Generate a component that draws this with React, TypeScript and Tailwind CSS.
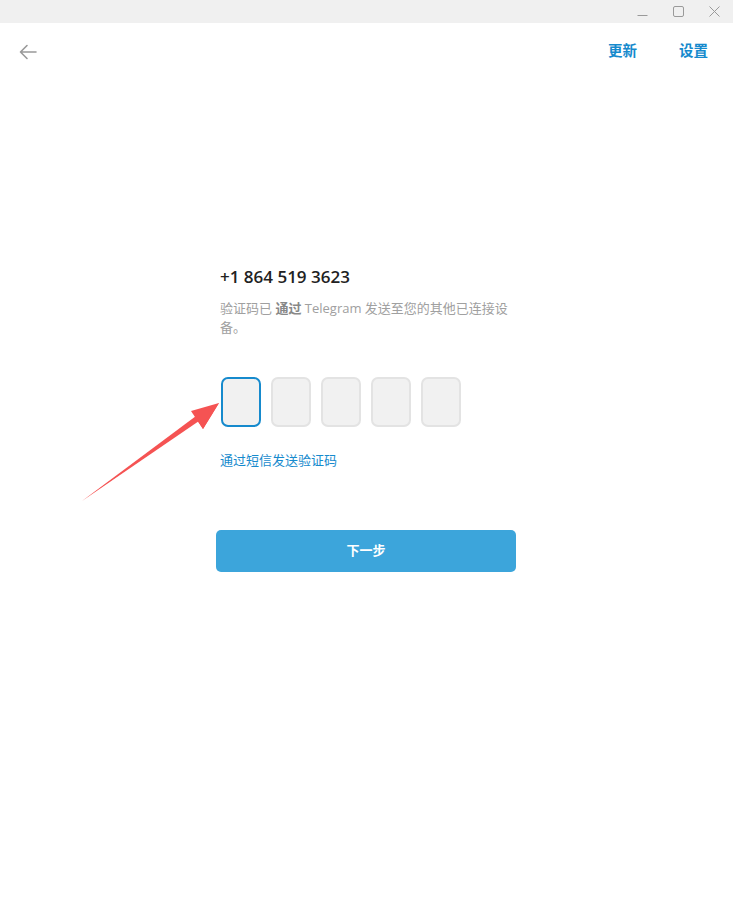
import React from "react";

const font = { fontFamily: '"Open Sans", "Noto Sans CJK SC", sans-serif' };

const CodeBox: React.FC<{ active?: boolean }> = ({ active }) => (
  <div
    className={
      "h-[50px] w-[40px] rounded-[7px] border-2 bg-[#f1f1f1] " +
      (active ? "border-[#168acd]" : "border-[#e3e3e3]")
    }
  />
);

const App: React.FC = () => {
  return (
    <div className="relative flex h-[910px] w-[733px] flex-col bg-white" style={font}>
      {/* title bar */}
      <div className="flex h-[23px] items-center justify-end bg-[#f0f0f0] pr-[1px] text-[#999]">
        <div className="flex h-[23px] w-[36px] items-center justify-center">
          <svg width="11" height="11" viewBox="0 0 11 11">
            <path d="M0.5 9.5h10" stroke="#9a9a9a" strokeWidth="1" />
          </svg>
        </div>
        <div className="flex h-[23px] w-[36px] items-center justify-center">
          <svg width="11" height="11" viewBox="0 0 11 11">
            <rect x="0.5" y="0.5" width="10" height="10" rx="1.5" fill="none" stroke="#9a9a9a" />
          </svg>
        </div>
        <div className="flex h-[23px] w-[36px] items-center justify-center">
          <svg width="11" height="11" viewBox="0 0 11 11">
            <path d="M0.5 0.5l10 10M10.5 0.5l-10 10" stroke="#9a9a9a" />
          </svg>
        </div>
      </div>

      {/* header */}
      <div className="flex h-[56px] items-center justify-between pl-[19px] pr-[25px]">
        <svg width="18" height="16" viewBox="0 0 18 16" className="mt-[1px]">
          <path
            d="M17 8H1.5M8 1.5L1.5 8 8 14.5"
            fill="none"
            stroke="#999"
            strokeWidth="1.6"
            strokeLinecap="round"
            strokeLinejoin="round"
          />
        </svg>
        <div className="flex gap-[42px] text-[14.5px] font-bold text-[#168acd]">
          <span>更新</span>
          <span>设置</span>
        </div>
      </div>

      {/* content */}
      <div className="ml-[216px] mt-[187px] flex w-[300px] flex-col">
        <div className="px-[4px] text-[17px] font-semibold leading-[22px] text-[#222]">
          +1 864 519 3623
        </div>
        <div className="mt-[11px] px-[4px] text-[13px] leading-[19px] text-[#a0a0a0]">
          验证码已 <span className="font-bold text-[#888]">通过</span> Telegram
          发送至您的其他已连接设备。
        </div>
        <div className="mt-[40px] flex gap-[10px] px-[5px]">
          <CodeBox active />
          <CodeBox />
          <CodeBox />
          <CodeBox />
          <CodeBox />
        </div>
        <div className="mt-[24px] px-[4px] text-[13px] leading-[18px] text-[#168acd]">
          通过短信发送验证码
        </div>
        <button className="mt-[61px] h-[42px] w-[300px] rounded-[5px] bg-[#3ca5db] text-[13px] font-bold text-white">
          下一步
        </button>
      </div>

      {/* annotation arrow */}
      <svg
        className="pointer-events-none absolute left-0 top-0"
        width="733"
        height="910"
        viewBox="0 0 733 910"
      >
        <path d="M82 501 L219 403 L203 429 L197 420 Z" fill="#f55353" />
        <path d="M219 403 L191 411 L203 429 Z" fill="#f55353" />
        <path d="M82 501 L196 416 L199 421 Z" fill="#f55353" />
      </svg>
    </div>
  );
};

export default App;
